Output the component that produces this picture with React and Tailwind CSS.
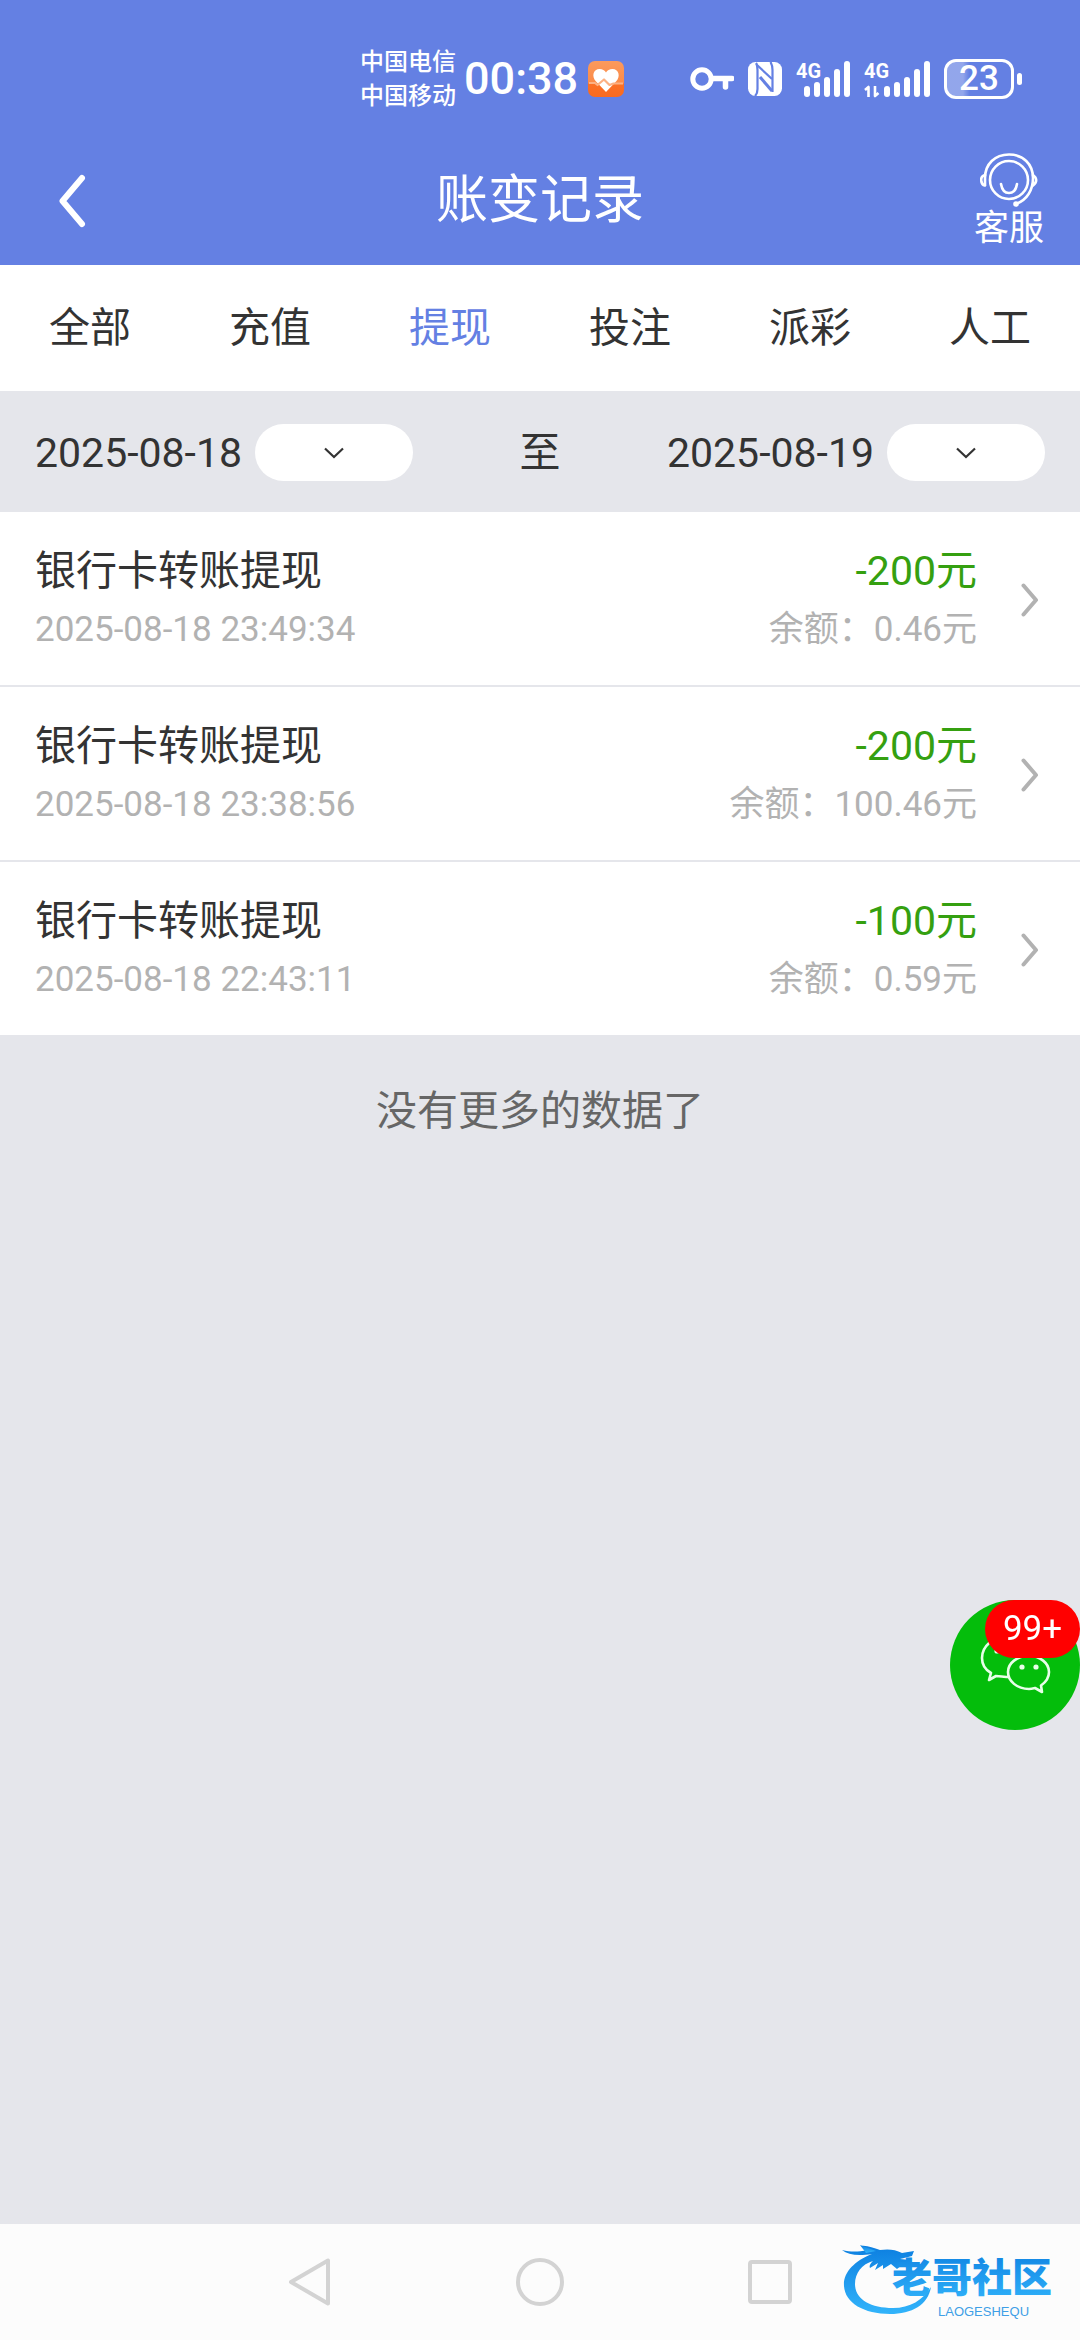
import React, { useState } from 'react';

const tabs = ['全部', '充值', '提现', '投注', '派彩', '人工'];

const records = [
  { id: 1, title: '银行卡转账提现', time: '2025-08-18 23:49:34', amount: '-200元', balance: '0.46元' },
  { id: 2, title: '银行卡转账提现', time: '2025-08-18 23:38:56', amount: '-200元', balance: '100.46元' },
  { id: 3, title: '银行卡转账提现', time: '2025-08-18 22:43:11', amount: '-100元', balance: '0.59元' },
];

function HeartIcon() {
  return (
    <svg className="w-9 h-9" viewBox="0 0 36 36">
      <defs>
        <linearGradient id="heartBg" x1="0" y1="0" x2="0" y2="1">
          <stop offset="0" stopColor="#fb9a5c" />
          <stop offset="0.62" stopColor="#fb8a48" />
          <stop offset="0.63" stopColor="#fb7026" />
          <stop offset="1" stopColor="#f96a20" />
        </linearGradient>
      </defs>
      <rect width="36" height="36" rx="7" fill="url(#heartBg)" />
      <path d="M18 31 L8 20.500 C3 15 5.500 8 11.500 8 C14.500 8 16.800 9.500 18 11.500 C19.200 9.500 21.500 8 24.500 8 C30.500 8 33 15 28 20.500 Z" fill="#fff" />
      <path d="M1 22 H7 L9.500 24 L16 18.500 L21.500 24 L25.500 22.500 H35" fill="none" stroke="#fcb184" strokeWidth="2.200" strokeLinejoin="round" />
    </svg>
  );
}

function KeyIcon() {
  return (
    <svg className="w-11 h-6" viewBox="0 0 44 24" fill="none" stroke="#fff">
      <circle cx="12" cy="12" r="9.200" strokeWidth="5" />
      <path d="M22 11.500 H42" strokeWidth="5.500" strokeLinecap="round" />
      <path d="M35.500 12 V20" strokeWidth="5.500" strokeLinecap="round" />
    </svg>
  );
}

function NfcIcon() {
  return (
    <svg className="w-[34px] h-[34px]" viewBox="0 0 34 34">
      <rect width="34" height="34" rx="7.500" fill="#fff" />
      <g fill="none" stroke="#6480e3" strokeWidth="2.200">
        <path d="M8 1 C9.500 3 9.500 5 9.500 8 V27 C9.500 30 9 32 7 34" />
        <path d="M9 3 L24 17" />
        <path d="M12 15 L24 29" strokeWidth="3" />
        <path d="M24.500 30 V8 C24.500 4.500 24 2.500 22.500 0" />
      </g>
    </svg>
  );
}

function Bars({ x }) {
  return (
    <g stroke="#fff" strokeWidth="6" strokeLinecap="round">
      <path d={`M${x + 3} 35 V30`} />
      <path d={`M${x + 13} 35 V26`} />
      <path d={`M${x + 23} 35 V21`} />
      <path d={`M${x + 33} 35 V13`} />
      <path d={`M${x + 43} 35 V5`} />
    </g>
  );
}

function Signal({ data }) {
  return (
    <svg className={data ? 'w-[66px] h-10' : 'w-[54px] h-10'} viewBox={data ? '0 0 66 40' : '0 0 54 40'}>
      <text x="0" y="19" fill="#fff" fontSize="20" fontWeight="700" fontFamily="Roboto, sans-serif">4G</text>
      {data && (
        <path d="M1 31 L4.500 28 V38 M14.500 34 L11 37 V27" fill="none" stroke="#fff" strokeWidth="2.600" strokeLinejoin="round" />
      )}
      <Bars x={data ? 20 : 8} />
    </svg>
  );
}

function StatusBar() {
  return (
    <div className="flex items-center h-[133px] pt-6 pl-[360px] pr-[58px]">
      <div className="text-2xl leading-[34px] font-medium">
        <p>中国电信</p>
        <p>中国移动</p>
      </div>
      <span className="ml-2 font-medium text-[45px] leading-[60px]">00:38</span>
      <span className="ml-[10px]">
        <HeartIcon />
      </span>
      <div className="ml-auto flex items-center gap-[14px]">
        <KeyIcon />
        <NfcIcon />
        <Signal />
        <Signal data />
        <div className="flex items-center gap-[3px]">
          <span className="w-[70px] h-10 rounded-xl border-[3px] border-white bg-linear-to-r from-white/30 from-25% to-transparent to-35% text-[35px] leading-[34px] font-medium text-center">
            23
          </span>
          <span className="w-[5px] h-3 rounded-full bg-white" />
        </div>
      </div>
    </div>
  );
}

function Header() {
  return (
    <header className="bg-[#6480e3] text-white">
      <StatusBar />
      <div className="grid grid-cols-[1fr_auto_1fr] items-center h-[132px] pt-1 px-9">
        <button aria-label="返回" className="justify-self-start px-[22px]">
          <svg className="w-[28px] h-[54px]" viewBox="0 0 28 54" fill="none" stroke="#fff" strokeWidth="6" strokeLinecap="round" strokeLinejoin="round">
            <path d="M24 4 L4.500 27 L24 50" />
          </svg>
        </button>
        <h1 className="text-[52px] leading-[60px]">账变记录</h1>
        <button className="justify-self-end flex flex-col items-center">
          <svg className="w-[58px] h-14" viewBox="0 0 58 56" fill="none" stroke="#fff" strokeWidth="2.600" strokeLinecap="round" strokeLinejoin="round">
            <circle cx="29" cy="27" r="19" />
            <path d="M5 32 V25 C5 11 15 1.500 29 1.500 C43 1.500 53 11 53 25 C53 37 47 47 36 51" />
            <path d="M5 22 C1.500 23 1 26 1.300 28 C1.600 31 3 32 5 32.500" />
            <path d="M53 22 C57 25 57.500 29 53 32.500" />
            <path d="M21 31 C22 37 25 40 29 40 C33 40 36 37 37 31" />
            <circle cx="36" cy="51" r="1.500" fill="#fff" />
          </svg>
          <span className="text-[35px] leading-10">客服</span>
        </button>
      </div>
    </header>
  );
}

function DateField({ value, label }) {
  return (
    <div className="flex items-center gap-[13px]">
      <time dateTime={value}>{value}</time>
      <button aria-label={label} className="flex items-center justify-center w-[158px] h-[57px] rounded-full bg-white">
        <svg className="w-5 h-3" viewBox="0 0 20 12" fill="none" stroke="#333" strokeWidth="2.200">
          <path d="M1 1.500 L10 10 L19 1.500" />
        </svg>
      </button>
    </div>
  );
}

function RecordRow({ record }) {
  return (
    <li className="border-b-2 border-[#e5e6eb] last:border-b-0">
      <a href="#" className="flex items-center pl-[35px] pr-[41px] h-[173px] pt-[2px] bg-white">
        <div className="grow">
          <p className="text-[41px] leading-[60px]">{record.title}</p>
          <p className="text-[35px] leading-[58px] text-[#b2b2b2]">{record.time}</p>
        </div>
        <div className="text-right">
          <p className="text-[41px] leading-[60px] text-[#35a010]">{record.amount}</p>
          <p className="text-[35px] leading-[58px] text-[#b2b2b2]">余额：{record.balance}</p>
        </div>
        <svg className="ml-11 w-[18px] h-[34px]" viewBox="0 0 18 34" fill="none" stroke="#b2b2b2" strokeWidth="4" strokeLinecap="round" strokeLinejoin="round">
          <path d="M2.500 2.500 L15 17 L2.500 31.500" />
        </svg>
      </a>
    </li>
  );
}

function ChatButton() {
  return (
    <button aria-label="微信客服" className="fixed right-0 bottom-[610px] size-[130px] rounded-full bg-[#04bd0b]">
      <svg className="w-full h-full" viewBox="0 0 130 130" fill="none" stroke="#e8ffe8" strokeWidth="2.600" strokeLinejoin="round">
        <path d="M60 77 C54 77 50 76 46 76 L39 80 L41 73 C34 69 32 63 32 58 C32 46 43 37 56 37 C68 37 77 44 80 54" />
        <path d="M79 56 C90 56 99 63 99 72 C99 78 96 82 91 85.500 L92 92 L85 88 C83 88.500 81 89 79 89 C67 89 58 81 58 72 C58 63 67 56 79 56 Z" />
        <g fill="#e8ffe8" stroke="none">
          <circle cx="72" cy="67" r="2.600" />
          <circle cx="86" cy="67" r="2.600" />
          <circle cx="47" cy="51" r="2.600" />
        </g>
      </svg>
      <span className="absolute right-0 top-0 w-[95px] h-[58px] rounded-full bg-[#ff0000] text-white text-[35px] leading-[58px] text-center">99+</span>
    </button>
  );
}

function CommunityLogo() {
  return (
    <svg className="w-[224px] h-[76px]" viewBox="0 0 224 76">
      <defs>
        <linearGradient id="logoBlue" x1="0" y1="0" x2="0" y2="1">
          <stop offset="0" stopColor="#0d7fe0" />
          <stop offset="1" stopColor="#32b4fb" />
        </linearGradient>
      </defs>
      <g fill="url(#logoBlue)">
        <path d="M30 10 C12 17 1 29 2 42 C3 59 22 70 48 70 C70 70 86 61 89 43 C81 56 68 64 51 64 C28 64 13 55 13 40 C13 29 20 20 31 17 C28 20 27 22 28 24 L36 19 L33 26 L41 21 L41 25 L49 20 L55 25 L60 21 L69 20 L68 16 L58 15 L70 12 L72 7 L60 9 C53 5 45 5 38 6 C31 4 25 1 19 2 L25 6 C16 8 9 8 0 6 C6 11 16 12 30 10 Z" />
        <path d="M18 1 L34 7 L24 9 Z" />
      </g>
      <text x="50" y="48" fill="url(#logoBlue)" fontSize="40" fontWeight="900" fontFamily="'Noto Sans CJK SC', sans-serif">老哥社区</text>
      <text x="96" y="72" fill="#3f9fe6" fontSize="13" fontFamily="'Liberation Sans', sans-serif">LAOGESHEQU</text>
    </svg>
  );
}

function SystemNav() {
  return (
    <nav className="relative flex items-center justify-center gap-[182px] h-[116px] bg-[#fcfcfc]">
      <button aria-label="后退">
        <svg className="w-12 h-12" viewBox="0 0 48 48" fill="none" stroke="#d3d3d3" strokeWidth="4" strokeLinejoin="round">
          <path d="M42 2.500 V45.500 L5 24 Z" />
        </svg>
      </button>
      <button aria-label="主页">
        <svg className="w-12 h-12" viewBox="0 0 48 48" fill="none" stroke="#d3d3d3" strokeWidth="4">
          <circle cx="24" cy="24" r="22" />
        </svg>
      </button>
      <button aria-label="最近任务">
        <svg className="w-12 h-12" viewBox="0 0 48 48" fill="none" stroke="#d3d3d3" strokeWidth="4">
          <rect x="4" y="4" width="40" height="40" rx="2" />
        </svg>
      </button>
      <div className="absolute right-[14px] top-5">
        <CommunityLogo />
      </div>
    </nav>
  );
}

function App() {
  const [active, setActive] = useState('提现');

  return (
    <div className="min-h-screen flex flex-col bg-[#e5e6eb] text-[#333] font-[Roboto,'Noto_Sans_CJK_SC',sans-serif]">
      <Header />
      <div className="grid grid-cols-6 bg-white">
        {tabs.map((tab) => (
          <button
            key={tab}
            onClick={() => setActive(tab)}
            className={`h-[126px] text-[41px] leading-[60px] ${active === tab ? 'text-[#6480e3]' : ''}`}
          >
            {tab}
          </button>
        ))}
      </div>
      <div className="flex items-center justify-between h-[121px] pt-[2px] px-[35px] text-[41px] leading-[60px]">
        <DateField value="2025-08-18" label="选择开始日期" />
        <span>至</span>
        <DateField value="2025-08-19" label="选择结束日期" />
      </div>
      <main className="grow">
        <ul>
          {records.map((record) => (
            <RecordRow key={record.id} record={record} />
          ))}
        </ul>
        <p className="pt-[46px] text-center text-[41px] leading-[60px] text-[#666]">没有更多的数据了</p>
      </main>
      <ChatButton />
      <SystemNav />
    </div>
  );
}

export default App;
